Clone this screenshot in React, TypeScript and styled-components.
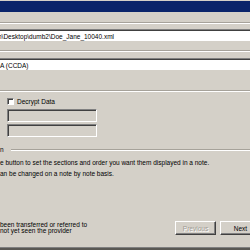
import React from 'react';
import styled, { createGlobalStyle } from 'styled-components';

const GlobalStyle = createGlobalStyle`
    html, body {
        margin: 0;
        padding: 0;
        background: #d4d0c8;
    }
    body {
        width: 250px;
        height: 250px;
        overflow: hidden;
        font-family: "Liberation Sans", Arial, sans-serif;
        font-size: 6.5px;
        color: #000;
    }
`;

const Window = styled.div`
    width: 250px;
    height: 250px;
    display: flex;
    flex-direction: column;
    background: #d4d0c8;
    overflow: hidden;
`;

const TitleBar = styled.div`
    margin-top: 1px;
    height: 11px;
    flex-shrink: 0;
    background: #0a246a;
`;

const Band = styled.div<{ h: number }>`
    height: ${({ h }) => h}px;
    flex-shrink: 0;
`;

const Rule = styled.div`
    height: 0;
    flex-shrink: 0;
    border-top: 1px solid #a6a29a;
    border-bottom: 1px solid #ffffff;
`;

const LegendRule = styled(Rule)`
    flex: 1;
`;

const Field = styled.div<{ indent?: number }>`
    height: 12px;
    flex-shrink: 0;
    box-sizing: border-box;
    border-top: 1px solid #808080;
    box-shadow: inset 0 1px 0 #404040;
    background: #ffffff;
    padding-top: 2px;
    line-height: 9px;
    white-space: nowrap;
    overflow: hidden;
    text-indent: ${({ indent }) => indent ?? 0}px;
`;

const Group = styled.div`
    display: flex;
    flex-direction: column;
    padding-left: 7px;
`;

const CheckRow = styled.label`
    display: flex;
    align-items: center;
    gap: 3px;
    height: 9px;
    margin-top: 5px;
`;

const Check = styled.span`
    width: 7px;
    height: 7px;
    box-sizing: border-box;
    background: #fff;
    border-top: 1px solid #808080;
    border-left: 1px solid #808080;
    border-right: 1px solid #fff;
    border-bottom: 1px solid #fff;
    box-shadow: inset 1px 1px 0 #404040;
`;

const Box = styled.div<{ top: number }>`
    width: 90px;
    height: 13px;
    margin-top: ${({ top }) => top}px;
    box-sizing: border-box;
    border-top: 1px solid #808080;
    border-left: 1px solid #808080;
    border-right: 1px solid #ffffff;
    border-bottom: 1px solid #ffffff;
    box-shadow: inset 1px 1px 0 #404040, inset -1px -1px 0 #d4d0c8;
`;

const Legend = styled.div`
    display: flex;
    align-items: center;
    gap: 7px;
    height: 8px;
    margin-top: 9px;
    line-height: 8px;
`;

const Para = styled.div<{ top: number }>`
    margin-top: ${({ top }) => top}px;
    line-height: 7px;
    white-space: nowrap;
`;

const Footer = styled.div`
    display: flex;
    align-items: center;
    justify-content: space-between;
    margin-top: 44px;
    height: 14px;
`;

const Note = styled.div`
    line-height: 6px;
    white-space: nowrap;
`;

const Buttons = styled.div`
    display: flex;
    gap: 4px;
    margin-right: -11px;
`;

const Btn = styled.button<{ disabled?: boolean }>`
    width: 41px;
    height: 14px;
    padding: 0;
    box-sizing: border-box;
    background: #d4d0c8;
    font-family: "Liberation Sans", Arial, sans-serif;
    font-size: 6.5px;
    color: ${({ disabled }) => (disabled ? '#a09c94' : '#000')};
    text-shadow: ${({ disabled }) => (disabled ? '1px 1px 0 #fff' : 'none')};
    border-top: 1px solid #ffffff;
    border-left: 1px solid #ffffff;
    border-right: 1px solid #404040;
    border-bottom: 1px solid #404040;
    box-shadow: inset -1px -1px 0 #808080;
`;

const BottomEdge = styled.div`
    margin-top: auto;
    height: 2px;
    background: #5a5854;
    border-top: 1px solid #808080;
`;

export default function App() {
    return (
        <Window>
            <GlobalStyle />
            <TitleBar />
            <Band h={10} />
            <Rule />
            <Band h={5} />
            <Field indent={-2}>n\Desktop\dumb2\Doe_Jane_10040.xml</Field>
            <Band h={9} />
            <Rule />
            <Band h={6} />
            <Field>A (CCDA)</Field>
            <Band h={20} />
            <Rule />
            <Group>
                <CheckRow>
                    <Check />
                    <span>Decrypt Data</span>
                </CheckRow>
                <Box top={3} />
                <Box top={2} />
            </Group>
            <Legend>
                <span>n</span>
                <LegendRule />
            </Legend>
            <Para top={5}>e button to set the sections and order you want them displayed in a note.</Para>
            <Para top={4}>an be changed on a note by note basis.</Para>
            <Footer>
                <Note>
                    been transferred or referred to
                    <br />
                    not yet seen the provider
                </Note>
                <Buttons>
                    <Btn disabled>Previous</Btn>
                    <Btn>Next</Btn>
                </Buttons>
            </Footer>
            <BottomEdge />
        </Window>
    );
}
